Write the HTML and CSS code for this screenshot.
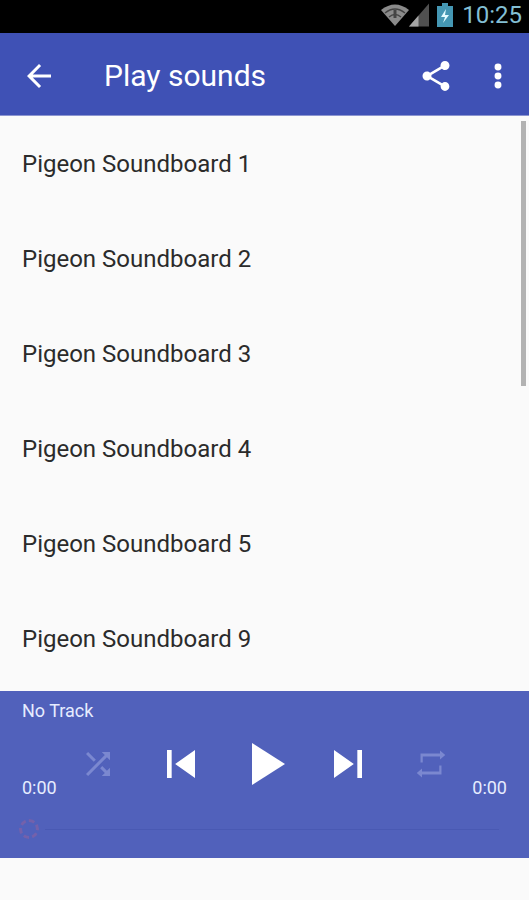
FILE: index.html
```html
<!DOCTYPE html>
<html lang="en">
<head>
<meta charset="utf-8">
<meta name="viewport" content="width=device-width, initial-scale=1">
<title>Play sounds</title>
<link rel="stylesheet" href="styles.css">
</head>
<body>
<div class="status">
  <svg class="status-wifi" viewBox="0 0 28 22" aria-hidden="true">
    <path d="M0 6Q14-5 28 6L14 22Z" fill="#8b8b8b"/>
    <path d="M4 9Q14 1 24 9M8 13Q14 8 20 13" fill="none" stroke="#444" stroke-width="1.5"/>
    <path d="M14 6v8" stroke="#444" stroke-width="3"/>
  </svg>
  <svg class="status-signal" viewBox="0 0 21 24" aria-hidden="true">
    <path d="M21 0V24H0Z" fill="#505050"/>
    <path d="M10 12.500V24H0Z" fill="#a5a5a5"/>
  </svg>
  <svg class="status-battery" viewBox="0 0 16 24" aria-hidden="true">
    <path d="M5 0h6v3h5v21H0V3h5Z" fill="#4597b3"/>
    <path d="M9 6 4 14h4l-2 6 6-8H8Z" fill="#e4fbff"/>
  </svg>
  <time class="status-time">10:25</time>
</div>
<header class="appbar">
  <button class="icon-button" type="button" aria-label="Back">
    <svg class="icon-bar" viewBox="0 0 24 24"><path d="M20 11H7.830l5.590-5.590L12 4l-8 8 8 8 1.410-1.410L7.830 13H20z"/></svg>
  </button>
  <h1 class="title">Play sounds</h1>
  <button class="icon-button" type="button" aria-label="Share">
    <svg class="icon-bar" viewBox="0 0 24 24"><path d="M18 16.080c-.76 0-1.440.3-1.960.770L8.910 12.700c.05-.23.09-.46.09-.7s-.04-.47-.09-.7l7.050-4.110c.54.5 1.250.81 2.040.81 1.660 0 3-1.340 3-3s-1.340-3-3-3-3 1.340-3 3c0 .24.04.47.09.7L8.040 9.810C7.500 9.310 6.790 9 6 9c-1.660 0-3 1.340-3 3s1.340 3 3 3c.79 0 1.500-.31 2.040-.81l7.120 4.160c-.05.21-.08.43-.08.650 0 1.610 1.310 2.920 2.920 2.920s2.920-1.310 2.920-2.920-1.310-2.920-2.920-2.920z"/></svg>
  </button>
  <button class="icon-button" type="button" aria-label="More options">
    <svg class="icon-bar" viewBox="0 0 24 24"><circle cx="12" cy="6" r="2.300"/><circle cx="12" cy="12" r="2.300"/><circle cx="12" cy="18" r="2.300"/></svg>
  </button>
</header>
<main class="sounds">
  <ul class="list">
    <li><button class="row" type="button">Pigeon Soundboard 1</button></li>
    <li><button class="row" type="button">Pigeon Soundboard 2</button></li>
    <li><button class="row" type="button">Pigeon Soundboard 3</button></li>
    <li><button class="row" type="button">Pigeon Soundboard 4</button></li>
    <li><button class="row" type="button">Pigeon Soundboard 5</button></li>
    <li><button class="row" type="button">Pigeon Soundboard 9</button></li>
  </ul>
  <div class="scroll-thumb"></div>
</main>
<section class="player" aria-label="Player">
  <p class="track">No Track</p>
  <div class="transport">
    <span class="time">0:00</span>
    <div class="controls">
      <button class="control dim" type="button" aria-label="Shuffle">
        <svg class="icon-small" viewBox="0 0 24 24"><path d="M10.590 9.170 5.410 4 4 5.410l5.170 5.170zM14.500 4l2.040 2.040L4 18.590 5.410 20 17.960 7.460 20 9.500V4zm.33 9.410-1.410 1.410 3.130 3.130L14.500 20H20v-5.500l-2.040 2.040z"/></svg>
      </button>
      <button class="control" type="button" aria-label="Previous">
        <svg class="icon-medium" viewBox="0 0 24 24"><path d="M6 6h2v12H6zm3.500 6 8.500 6V6z"/></svg>
      </button>
      <button class="control" type="button" aria-label="Play">
        <svg class="icon-large" viewBox="0 0 24 24"><path d="M8 5v14l11-7z"/></svg>
      </button>
      <button class="control" type="button" aria-label="Next">
        <svg class="icon-medium" viewBox="0 0 24 24"><path d="m6 18 8.500-6L6 6zM16 6v12h2V6z"/></svg>
      </button>
      <button class="control dim" type="button" aria-label="Repeat">
        <svg class="icon-small" viewBox="0 0 24 24"><path d="M5 5h13V3l3.500 3L18 9V7H6.500v4H5zM19 19H6v2l-3.500-3L6 15v2h11.500v-4H19z"/></svg>
      </button>
    </div>
    <span class="time">0:00</span>
  </div>
  <input class="seek" type="range" min="0" max="100" value="0" aria-label="Position">
</section>
</body>
</html>
```
FILE: styles.css
```css
* {
  box-sizing: border-box;
}

body {
  display: flex;
  flex-direction: column;
  height: 100vh;
  margin: 0;
  padding-bottom: 42px;
  background: #fafafa;
  color: #2b2b2b;
  font-family: Roboto, "Liberation Sans", sans-serif;
}

button {
  margin: 0;
  padding: 0;
  border: 0;
  background: none;
  color: inherit;
  font: inherit;
}

svg {
  display: block;
  flex: none;
  fill: currentColor;
}

.status {
  display: flex;
  flex: none;
  align-items: center;
  justify-content: flex-end;
  height: 33px;
  padding: 0 7px 4px;
  background: #000;
}

.status-wifi {
  width: 28px;
  height: 22px;
}

.status-signal {
  width: 20px;
  height: 24px;
}

.status-battery {
  width: 16px;
  height: 24px;
  margin: 0 9px 0 8px;
}

.status-time {
  color: #83bfd4;
  font-size: 24px;
  line-height: 28px;
}

.appbar {
  display: flex;
  flex: none;
  align-items: center;
  height: 83px;
  padding: 3px 0 0 8px;
  border-bottom: 1px solid #8c95d0;
  background: #3f51b5;
  color: #fff;
}

.icon-button {
  display: grid;
  place-items: center;
  width: 62px;
  height: 62px;
}

.icon-bar {
  width: 36px;
  height: 36px;
}

.title {
  flex: 1;
  margin: 0;
  padding-left: 34px;
  font-size: 30px;
  font-weight: 400;
  line-height: 40px;
}

.sounds {
  position: relative;
  flex: 1;
  min-height: 0;
}

.list {
  height: 100%;
  margin: 0;
  padding: 0;
  overflow-y: auto;
  list-style: none;
  scrollbar-width: none;
}

.row {
  display: block;
  width: 100%;
  height: 95px;
  padding: 0 22px;
  font-size: 24px;
  text-align: left;
}

.scroll-thumb {
  position: absolute;
  top: 5px;
  right: 3px;
  width: 5px;
  height: 46%;
  background: #b2b2b2;
}

.player {
  display: flex;
  flex: none;
  flex-direction: column;
  padding: 8px 22px 14px;
  background: #5161bb;
  color: #e6ecff;
}

.track {
  margin: 0 0 5px;
  font-size: 18px;
  line-height: 24px;
}

.transport {
  display: flex;
  height: 72px;
}

.time {
  align-self: flex-end;
  font-size: 18px;
  line-height: 24px;
}

.controls {
  display: grid;
  flex: 1;
  grid-template-columns: repeat(5, 1fr);
}

.control {
  display: grid;
  place-items: center;
  color: #fff;
}

.dim {
  color: #7b88d0;
}

.icon-small {
  width: 36px;
  height: 36px;
}

.icon-medium {
  width: 56px;
  height: 56px;
}

.icon-large {
  width: 72px;
  height: 72px;
}

.seek {
  height: 30px;
  margin: 14px 8px 0 -3px;
  background: none;
  appearance: none;
}

.seek::-webkit-slider-runnable-track {
  height: 20px;
  background: linear-gradient(#4959b3, #4959b3) right center / calc(100% - 26px) 1px no-repeat;
}

.seek::-webkit-slider-thumb {
  width: 20px;
  height: 20px;
  border: 3px dashed #7461ab;
  border-radius: 50%;
  appearance: none;
}
```
